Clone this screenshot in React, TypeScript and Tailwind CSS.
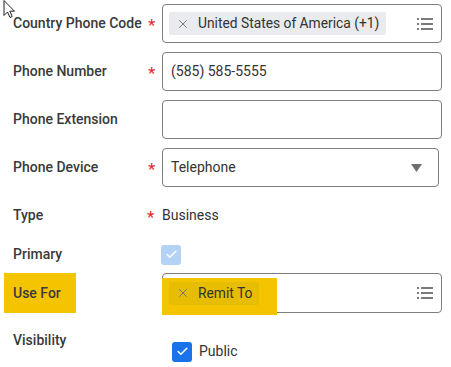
import { Check, X } from "lucide-react";

const font = { fontFamily: "Roboto, 'Noto Sans', sans-serif" };

function ListIcon() {
  return (
    <svg width="16" height="12" viewBox="0 0 16 12" className="shrink-0">
      <g fill="#7b7b7b">
        <rect x="0" y="0" width="2" height="2" />
        <rect x="4" y="0" width="12" height="2" />
        <rect x="0" y="5" width="2" height="2" />
        <rect x="4" y="5" width="12" height="2" />
        <rect x="0" y="10" width="2" height="2" />
        <rect x="4" y="10" width="12" height="2" />
      </g>
    </svg>
  );
}

function Star() {
  return <span className="text-[17px] leading-none text-[#de2d2d]">*</span>;
}

function Chip({ label, yellow = false }: { label: string; yellow?: boolean }) {
  return (
    <div
      className={`flex h-[23px] items-center gap-[8px] rounded-[2px] pr-[7px] pl-[7px] ${
        yellow ? "bg-[#e6bd00]" : "bg-[#e9ebee]"
      }`}
    >
      <X className="h-[14px] w-[14px] text-[#6b6b6b]" strokeWidth={1.5} />
      <span className="text-[13.8px] text-[#333]">{label}</span>
    </div>
  );
}

export default function App() {
  return (
    <div className="relative h-[367px] w-[451px] overflow-hidden bg-white text-[#333]" style={font}>
      {/* mouse cursor */}
      <svg className="absolute top-0 left-[3px]" width="14" height="19" viewBox="0 0 14 19">
        <path
          d="M1 0.5 L1 15.5 L4.5 12 L7 17.5 L9.2 16.5 L6.8 11.2 L11.5 11.2 Z"
          fill="white"
          stroke="#222"
          strokeWidth="1"
          strokeLinejoin="round"
        />
      </svg>

      <div className="flex flex-col pt-[4px]">
        {/* Country Phone Code */}
        <div className="flex h-[39px] items-center">
          <div className="w-[148px] pl-[13px] text-[14px] font-medium text-[#3a3a3a]">Country Phone Code</div>
          <div className="flex w-[14px] items-center pt-[4px]">
            <Star />
          </div>
          <div className="flex h-[39px] w-[280px] items-center justify-between rounded-[4px] border border-[#7d7d7d] pr-[8px] pl-[6px]">
            <Chip label="United States of America (+1)" />
            <ListIcon />
          </div>
        </div>

        {/* Phone Number */}
        <div className="mt-[9px] flex h-[39px] items-center">
          <div className="w-[148px] pl-[13px] text-[14px] font-medium text-[#3a3a3a]">Phone Number</div>
          <div className="flex w-[14px] items-center pt-[4px]">
            <Star />
          </div>
          <div className="flex h-[39px] w-[280px] items-center rounded-[4px] border border-[#7d7d7d] pl-[8px] text-[14px]">
            (585) 585-5555
          </div>
        </div>

        {/* Phone Extension */}
        <div className="mt-[9px] flex h-[39px] items-center">
          <div className="w-[148px] pl-[13px] text-[14px] font-medium text-[#3a3a3a]">Phone Extension</div>
          <div className="w-[14px]" />
          <div className="h-[39px] w-[280px] rounded-[4px] border border-[#7d7d7d]" />
        </div>

        {/* Phone Device */}
        <div className="mt-[9px] flex h-[39px] items-center">
          <div className="w-[148px] pl-[13px] text-[14px] font-medium text-[#3a3a3a]">Phone Device</div>
          <div className="flex w-[14px] items-center pt-[4px]">
            <Star />
          </div>
          <div className="flex h-[39px] w-[277px] items-center justify-between rounded-[4px] border border-[#7d7d7d] pr-[16px] pl-[8px] text-[14px]">
            Telephone
            <svg width="11" height="8" viewBox="0 0 11 8">
              <path d="M0 0 H11 L5.5 8 Z" fill="#6e6e6e" />
            </svg>
          </div>
        </div>

        {/* Type */}
        <div className="mt-[8px] flex h-[40px] items-center">
          <div className="w-[147px] pl-[13px] text-[14px] font-medium text-[#3a3a3a]">Type</div>
          <div className="flex w-[15px] items-center pt-[4px]">
            <Star />
          </div>
          <div className="text-[14px]">Business</div>
        </div>

        {/* Primary */}
        <div className="flex h-[39px] items-center">
          <div className="w-[161px] pl-[13px] text-[14px] font-medium text-[#3a3a3a]">Primary</div>
          <div className="flex h-[20px] w-[20px] items-center justify-center rounded-[3px] bg-[#b4d2f4]">
            <Check className="h-[13px] w-[13px] text-white" strokeWidth={3} />
          </div>
        </div>

        {/* Use For */}
        <div className="mt-[-1px] flex h-[42px] items-start">
          <div className="ml-[4px] flex h-[40px] w-[72px] items-center bg-[#f5c400] pl-[9px] text-[14px] font-medium text-[#3a3a3a]">
            Use For
          </div>
          <div className="w-[86px]" />
          <div className="relative flex h-[40px] w-[280px] items-center justify-between rounded-[4px] border border-[#7d7d7d] pr-[8px] pl-[6px]">
            <div className="absolute top-[4px] left-[-1px] h-[37px] w-[115px] bg-[#f5c400]" />
            <div className="relative">
              <Chip label="Remit To" yellow />
            </div>
            <ListIcon />
          </div>
        </div>

        {/* Visibility */}
        <div className="mt-[15px] flex items-start">
          <div className="w-[172px] pl-[13px] text-[14px] font-medium leading-[20px] text-[#3a3a3a]">Visibility</div>
          <div className="mt-[11px] flex items-center gap-[7px]">
            <div className="flex h-[20px] w-[20px] items-center justify-center rounded-[3px] bg-[#1a73e8]">
              <Check className="h-[13px] w-[13px] text-white" strokeWidth={3} />
            </div>
            <span className="text-[14px]">Public</span>
          </div>
        </div>
      </div>
    </div>
  );
}
